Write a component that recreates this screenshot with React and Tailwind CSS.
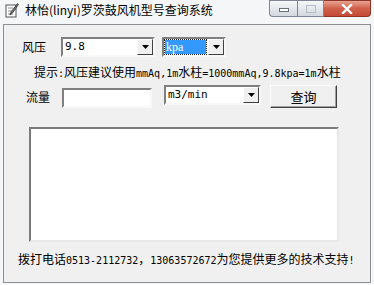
import React from 'react';

const cjk = { fontFamily: '"Noto Sans CJK SC", "Noto Sans", sans-serif' };
const mono = { fontFamily: '"DejaVu Sans Mono", "Liberation Mono", monospace' };

// half-width latin run, sized to match the 6px cell of a 12px CJK font
const M = ({ children }) => (
    <span className="text-[10px]" style={mono}>{children}</span>
);

const DropArrow = () => (
    <div className="w-[16px] h-full bg-[#f0f0f0] border border-t-white border-l-white border-b-[#404040] border-r-[#404040] flex items-center justify-center">
        <svg width="7" height="4" viewBox="0 0 7 4"><path d="M0 0h7L3.5 4z" fill="#000" /></svg>
    </div>
);

const Combo = ({ width, value, selected }) => (
    <div className={`${width} h-[20px] border-2 border-t-[#808080] border-l-[#808080] border-b-[#f8f8f8] border-r-[#f8f8f8] bg-white flex items-stretch`}>
        <div className="flex-1 flex items-center pl-[1px] pr-[2px]">
            {selected ? (
                <div className="h-[14px] w-full bg-[#3399ff] outline-1 outline-dotted outline-[#222] text-white flex items-center pl-[1px] text-[12px] leading-none" style={{ fontFamily: '"Liberation Serif", serif' }}>
                    {value}
                </div>
            ) : (
                <span className="text-[11px] text-black pl-[1px]" style={mono}>{value}</span>
            )}
        </div>
        <DropArrow />
    </div>
);

const App = () => {
    return (
        <div className="w-[374px] h-[285px] bg-[#f4f6f8] relative overflow-hidden" style={cjk}>
            {/* title bar */}
            <div className="h-[24px] flex items-start">
                <svg className="ml-[5px] mt-[3px]" width="14" height="15" viewBox="0 0 14 15">
                    <rect x="1" y="2" width="10" height="12" fill="#fff" stroke="#555" />
                    <path d="M3 5h5M3 8h4M3 11h5" stroke="#888" />
                    <path d="M12.5 0.5L6 9l-1 3 2.5-2L13.5 1.5z" fill="#777" stroke="#333" strokeWidth="0.8" />
                </svg>
                <div className="ml-[6px] mt-[2px] text-[12px] leading-[16px] text-black">林怡(linyi)罗茨鼓风机型号查询系统</div>
                <div className="ml-auto mr-[3px] flex h-[17px]">
                    <div className="w-[28px] h-full border border-[#7f8591] border-r-0 rounded-bl-[4px] bg-gradient-to-b from-[#f6f8fa] to-[#d3d8df] flex items-center justify-center">
                        <div className="w-[10px] h-[4px] border border-[#6a7079] bg-white mt-[3px]" />
                    </div>
                    <div className="w-[27px] h-full border border-[#7f8591] bg-gradient-to-b from-[#f6f8fa] to-[#d3d8df] flex items-center justify-center">
                        <div className="w-[10px] h-[8px] border border-[#b6bbc2]" />
                    </div>
                    <div className="w-[47px] h-full border border-[#8c3528] border-l-0 rounded-br-[4px] bg-gradient-to-b from-[#e6a391] via-[#d0604a] to-[#c44a36] flex items-center justify-center">
                        <svg width="12" height="10" viewBox="0 0 12 10">
                            <path d="M2 1l8 8M10 1l-8 8" stroke="#fff" strokeWidth="2.4" strokeLinecap="square" />
                        </svg>
                    </div>
                </div>
            </div>

            {/* client area */}
            <div className="mx-[3px] h-[259px] border border-[#8d8f92] bg-[#f0f0f0] text-[12px] text-black">
                <div className="flex items-center mt-[12px] h-[20px]">
                    <span className="ml-[18px] w-[39px]">风压</span>
                    <Combo width="w-[94px]" value="9.8" />
                    <div className="w-[7px]" />
                    <Combo width="w-[64px]" value="kpa" selected />
                </div>
                <div className="mt-[7px] ml-[30px] h-[16px] leading-[16px] whitespace-nowrap">
                    提示<M>:</M>风压建议使用<M>mmAq,1m</M>水柱<M>=1000mmAq,9.8kpa=1m</M>水柱
                </div>
                <div className="flex items-center mt-[5px] h-[23px]">
                    <span className="ml-[22px] w-[36px]">流量</span>
                    <div className="w-[90px] h-[20px] mt-[3px] border-2 border-t-[#808080] border-l-[#808080] border-b-[#f8f8f8] border-r-[#f8f8f8] bg-white" />
                    <div className="w-[12px]" />
                    <div className="self-start">
                        <Combo width="w-[97px]" value="m3/min" />
                    </div>
                    <div className="w-[9px]" />
                    <button className="w-[67px] h-[23px] bg-[#f0f0f0] border border-t-white border-l-white border-b-[#404040] border-r-[#404040] shadow-[inset_-1px_-1px_0_#a0a0a0] text-[13px] leading-none">
                        查询
                    </button>
                </div>
                <div className="ml-[25px] mt-[19px] w-[310px] h-[115px] border-2 border-t-[#7a7a7a] border-l-[#7a7a7a] border-b-[#e8e8e8] border-r-[#e8e8e8] bg-white" />
                <div className="ml-[14px] mt-[9px] h-[16px] leading-[16px] whitespace-nowrap">
                    拨打电话<M>0513-2112732</M>，<M>13063572672</M>为您提供更多的技术支持<M>!</M>
                </div>
            </div>
        </div>
    );
};

export default App;
